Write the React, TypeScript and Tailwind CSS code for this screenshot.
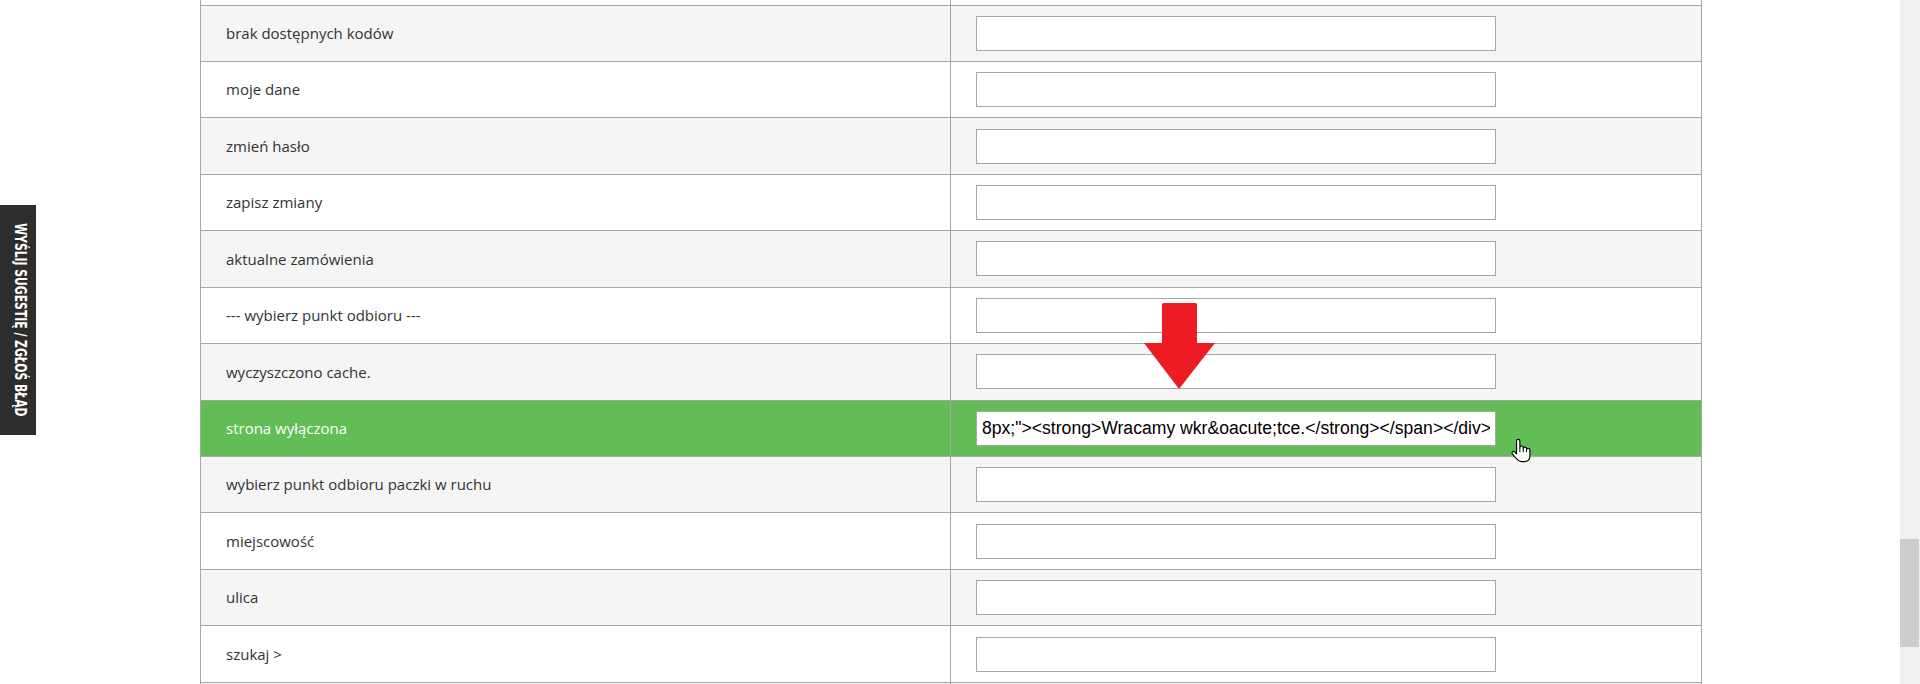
import React from "react";

type Row = { label: string; tone: "gray" | "white" | "green"; value?: string };

const rows: Row[] = [
  { label: "brak dostępnych kodów", tone: "gray" },
  { label: "moje dane", tone: "white" },
  { label: "zmień hasło", tone: "gray" },
  { label: "zapisz zmiany", tone: "white" },
  { label: "aktualne zamówienia", tone: "gray" },
  { label: "--- wybierz punkt odbioru ---", tone: "white" },
  { label: "wyczyszczono cache.", tone: "gray" },
  {
    label: "strona wyłączona",
    tone: "green",
    value: '8px;"><strong>Wracamy wkr&oacute;tce.</strong></span></div>',
  },
  { label: "wybierz punkt odbioru paczki w ruchu", tone: "gray" },
  { label: "miejscowość", tone: "white" },
  { label: "ulica", tone: "gray" },
  { label: "szukaj >", tone: "white" },
];

function TableRow({ row }: { row: Row }) {
  const bg =
    row.tone === "green"
      ? "bg-[#63bd56]"
      : row.tone === "gray"
      ? "bg-[#f5f5f5]"
      : "bg-white";
  const text = row.tone === "green" ? "text-white" : "text-[#333333]";
  return (
    <div
      className={`flex h-[56.45px] w-[1502px] border-x border-t border-[#a6a6a6] ${bg}`}
    >
      <div
        className={`flex w-[749px] shrink-0 items-center pl-[25px] text-[15px] ${text}`}
        style={{ fontFamily: '"Open Sans", sans-serif' }}
      >
        {row.label}
      </div>
      <div className="flex flex-1 items-center border-l border-[#a6a6a6] pl-[25px]">
        <input
          readOnly
          value={row.value ?? ""}
          className="h-[35px] w-[520px] border border-[#a6a6a6] bg-white px-[5px] text-[17.6px] text-black outline-none"
          style={{ fontFamily: '"Liberation Sans", Arial, sans-serif' }}
        />
      </div>
    </div>
  );
}

function HandCursor() {
  return (
    <svg
      width="20"
      height="25"
      viewBox="0 0 18 22"
      className="absolute left-[1511px] top-[438px]"
    >
      <path
        d="M5 2.5 A1.5 1.5 0 0 1 8 2.5 V8.5 A1.5 1.5 0 0 1 11 8.5 V9.5 A1.5 1.5 0 0 1 14 9.5 V10.5 A1.5 1.5 0 0 1 17 10.5 V16 C17 19 15 21 12 21 H9.5 C7.5 21 6.5 20 5.5 19 L1.3 14.3 A1.4 1.4 0 0 1 3.4 12.4 L5 14 Z"
        fill="white"
        stroke="black"
        strokeWidth="1"
        strokeLinejoin="round"
      />
      <path d="M8 8.5 V12.5 M11 9.5 V12.5 M14 10.5 V12.5" stroke="black" strokeWidth="0.9" />
    </svg>
  );
}

function RedArrow() {
  return (
    <svg
      width="73"
      height="88"
      viewBox="0 0 73 88"
      className="absolute left-[1143px] top-[303px]"
    >
      <path
        d="M19 1.5 Q19 0 20.5 0 H52.5 Q54 0 54 1.5 V40 H72 L36 86 L1 40 H19 V1.5 Z"
        fill="#ed1c24"
      />
    </svg>
  );
}

export default function App() {
  return (
    <div className="relative flex h-[684px] w-full overflow-hidden bg-white">
      <div className="flex-1 pl-[200px]">
        <div className="h-[4.5px] w-[1502px] border-x border-[#a6a6a6] bg-white">
          <div className="ml-[749px] h-full border-l border-[#a6a6a6]" />
        </div>
        {rows.map((r) => (
          <TableRow key={r.label} row={r} />
        ))}
        <div className="h-[20px] w-[1502px] border-x border-t border-[#a6a6a6] bg-[#f5f5f5]">
          <div className="ml-[749px] h-full border-l border-[#a6a6a6]" />
        </div>
      </div>

      <div className="flex w-[20px] shrink-0 flex-col bg-[#f0f0f0]">
        <div className="h-[539px]" />
        <div className="h-[108px] w-[19px] bg-[#cdcdcd]" />
      </div>

      <div className="absolute left-0 top-[205px] flex h-[230px] w-[36px] items-center justify-center overflow-visible bg-[#2d2d2d] pl-[3px]">
        <span
          className="shrink-0 scale-y-[0.8] whitespace-nowrap text-[15px] font-bold uppercase leading-none text-white [writing-mode:vertical-rl]"
          style={{ fontFamily: '"DejaVu Sans Condensed", "DejaVu Sans", sans-serif' }}
        >
          WYŚLIJ SUGESTIĘ / ZGŁOŚ BŁĄD
        </span>
      </div>

      <RedArrow />
      <HandCursor />
    </div>
  );
}
